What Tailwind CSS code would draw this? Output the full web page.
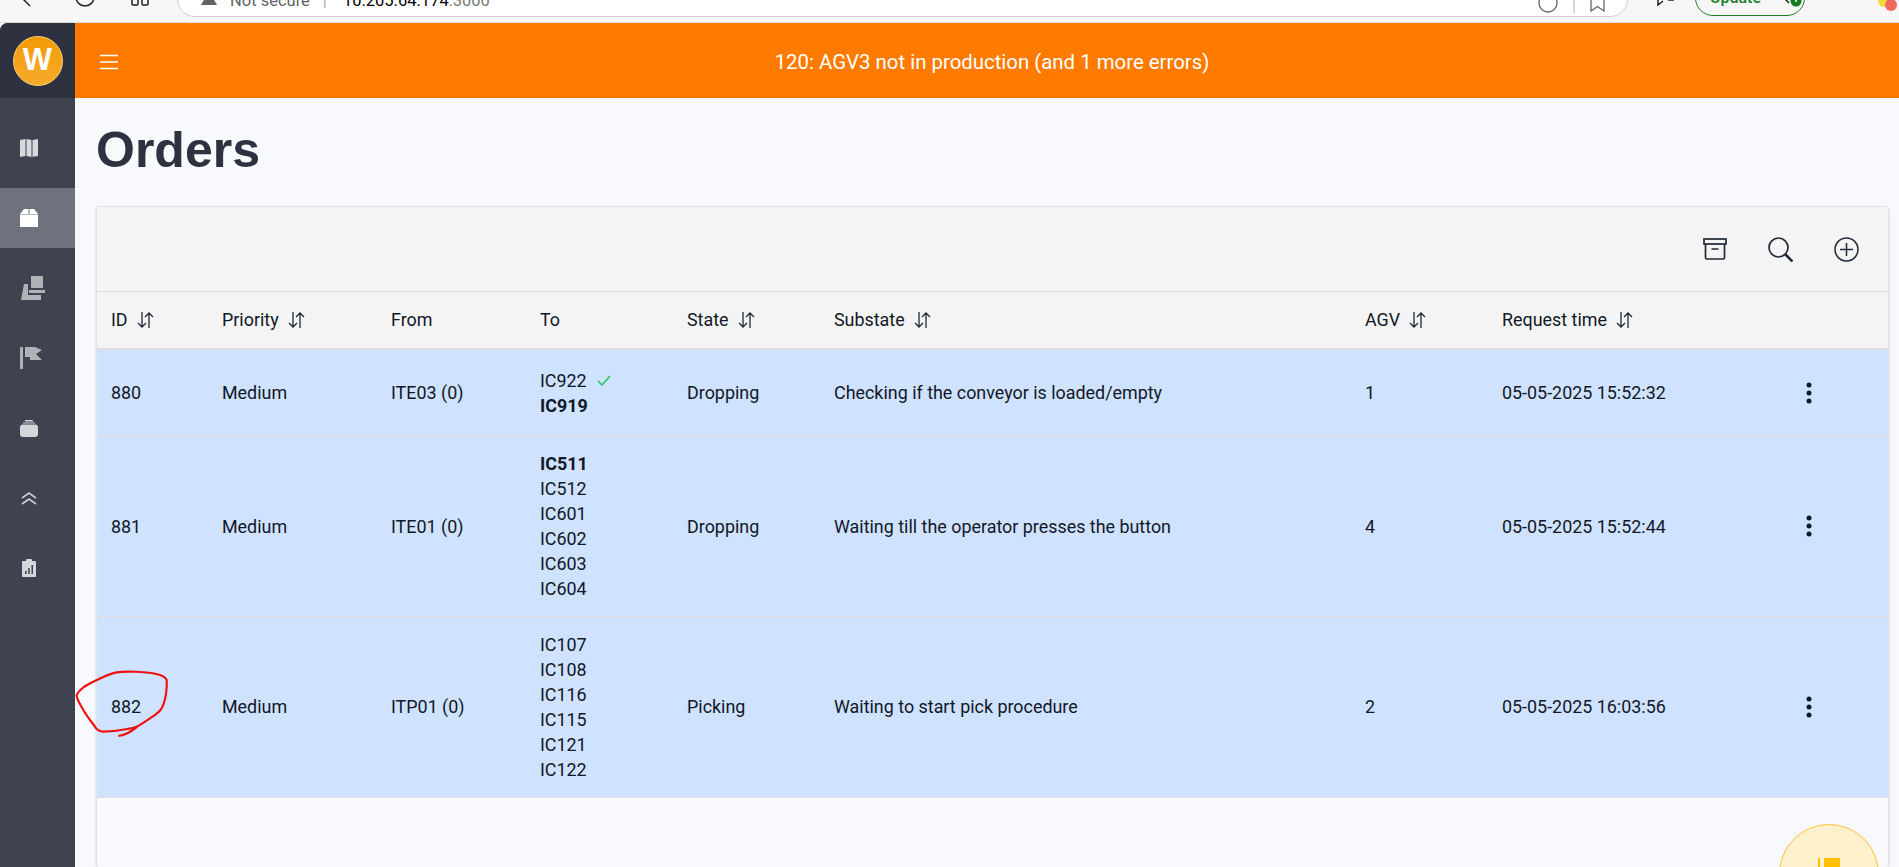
<!DOCTYPE html>
<html lang="en">
<head>
  <meta charset="UTF-8" />
  <title>Orders</title>
  <script src="https://cdn.jsdelivr.net/npm/@tailwindcss/browser@4"></script>
</head>
<body class="bg-[#f6f6f6] font-['Roboto',sans-serif] text-[17.900px] text-[#111827]">
<div class="relative h-[867px] overflow-hidden">
  <!-- browser bar, cut off at the top -->
  <div class="flex h-[23px] items-end overflow-hidden border-b border-[#dcdcdc] pb-[5px]">
    <svg class="mb-[10px] ml-[23px] shrink-0" width="8" height="20" viewBox="0 0 8 20" fill="none" stroke="#222" stroke-width="1.500"><path d="M0 12l7 7"/></svg>
    <svg class="mb-[10px] ml-[44px] shrink-0" width="20" height="20" viewBox="0 0 20 20" fill="none" stroke="#222" stroke-width="1.500"><circle cx="10" cy="10" r="9"/></svg>
    <svg class="mb-[11px] ml-[36px] shrink-0" width="18" height="20" viewBox="0 0 18 20" fill="none" stroke="#222" stroke-width="1.500"><rect x="1" y="4" width="6" height="15" rx="1"/><rect x="11" y="4" width="6" height="15" rx="1"/></svg>
    <div class="ml-[28px] flex h-[40px] w-[1451px] shrink-0 items-end rounded-b-[18px] border border-[#cfcfcf] bg-white pb-[3px] pl-[23px] pr-[22px] text-[16.500px] leading-[24px]">
      <svg class="mb-[8px]" width="16" height="14" viewBox="0 0 16 14" fill="#5f6368"><path d="M8 0l8 14H0z"/></svg>
      <span class="ml-[13px] text-[#5f6368]">Not secure</span>
      <span class="ml-[13px] text-[#aaaaaa]">|</span>
      <span class="ml-[16px] text-black">10.205.64.174<span class="text-[#777777]">:3000</span></span>
      <svg class="mb-[0px] ml-auto" width="20" height="20" viewBox="0 0 20 20" fill="none" stroke="#666" stroke-width="1.300"><circle cx="10" cy="10" r="9"/></svg>
      <span class="mx-[15px] h-[20px] w-[2px] bg-[#d5d5d5]"></span>
      <svg class="mb-[1px]" width="15" height="20" viewBox="0 0 15 20" fill="none" stroke="#666" stroke-width="1.300"><path d="M1 6h13v13l-6.500-4.500L1 19z"/></svg>
    </div>
    <svg class="mb-[11px] ml-[29px] shrink-0" width="17" height="20" viewBox="0 0 17 20" fill="none" stroke="#222" stroke-width="1.500"><path d="M1 6v13l5-4M11 14h6M11 10h6"/></svg>
    <div class="mb-[1px] ml-[21px] flex h-[40px] w-[110px] shrink-0 items-end rounded-b-[18px] border border-[#1a7f26] pb-[5px] pl-[14px] text-[16px] leading-[24px] font-medium text-[#1a7f26]">
      Update
      <svg class="mb-[3px] ml-[20px]" width="22" height="14" viewBox="0 0 22 14" fill="none"><path d="M0 2l8 8" stroke="#222" stroke-width="1.500"/><circle cx="15" cy="8" r="5.500" fill="#157a1e"/><path d="M15 5v4" stroke="#fff" stroke-width="1.500"/></svg>
    </div>
    <svg class="mb-[6px] ml-[70px] shrink-0" width="24" height="20" viewBox="0 0 24 20"><circle cx="9" cy="10" r="6" fill="#f2dc3c"/><circle cx="16" cy="14" r="6" fill="#ee6a5f"/></svg>
  </div>

  <div class="flex h-[844px]">
    <aside class="flex w-[75px] shrink-0 flex-col overflow-hidden rounded-tl-[8px] bg-[#3f4350]">
      <div class="flex h-[75px] shrink-0 items-center justify-center bg-[#2d3140]">
        <div class="flex h-[50px] w-[50px] items-center justify-center rounded-full border border-[#ffd27a] bg-linear-to-b from-[#f29a00] to-[#f7ab2a] font-['Liberation_Sans',sans-serif] text-[31px] font-bold text-white">W</div>
      </div>
      <nav class="flex flex-col gap-[10px] pt-[20px]">
        <a class="flex h-[60px] items-center pl-[20px]">
          <svg width="18" height="18" viewBox="0 0 18 18" fill="#d8d9dc"><path d="M0 1l5.500-1v17L0 18zM6.500 0l5 1v17l-5-1zM12.500 1L18 0v17l-5.500 1z"/></svg>
        </a>
        <a class="flex h-[60px] items-center bg-[#6f727c] pl-[20px]">
          <svg width="18" height="18" viewBox="0 0 18 18" fill="#ffffff"><path d="M0 5 4 0h4.500v5zM9.500 0H14l4 5H9.500zM0 5.500h18V18H0z"/></svg>
        </a>
        <a class="flex h-[60px] items-center pl-[21px]">
          <svg width="24" height="24" viewBox="0 0 24 24" fill="#b0b2b8"><path d="M10 0h12v12H10zM8 14h16v3H8zM3 8h4v11h13v5H0z"/></svg>
        </a>
        <a class="flex h-[60px] items-center pl-[20px]">
          <svg width="22" height="22" viewBox="0 0 22 22" fill="#b0b2b8"><path d="M0 0h3v22H0zM5 0h10l7 3-6 4 6 6H10v-3H5z"/></svg>
        </a>
        <a class="flex h-[60px] items-center pl-[20px]">
          <svg width="18" height="17" viewBox="0 0 18 17" fill="#d5d6d9"><path d="M5 0h8v1.500H5zM3 2.500h12v1H3zM3 4.500h12a3 3 0 0 1 3 3V14a3 3 0 0 1-3 3H3a3 3 0 0 1-3-3V7.500a3 3 0 0 1 3-3z"/></svg>
        </a>
        <a class="flex h-[60px] items-center pl-[21px]">
          <svg width="16" height="13" viewBox="0 0 16 13" fill="none" stroke="#c9cbd0" stroke-width="1.600"><path d="M1 6l7-5 7 5M1 12l7-5 7 5"/></svg>
        </a>
        <a class="flex h-[60px] items-center pl-[22px]">
          <svg width="14" height="18" viewBox="0 0 14 18" fill="#d5d6d9"><path fill-rule="evenodd" d="M1 2h3V1a1 1 0 0 1 1-1h4a1 1 0 0 1 1 1v1h3a1 1 0 0 1 1 1v14a1 1 0 0 1-1 1H1a1 1 0 0 1-1-1V3a1 1 0 0 1 1-1zM3 12v3h1.500v-3zM6.200 9v6h1.500V9zM9.500 6v9H11V6z"/></svg>
        </a>
      </nav>
    </aside>

    <div class="flex min-w-0 flex-1 flex-col bg-[#f7f9fc]">
      <header class="relative flex h-[75px] shrink-0 items-center justify-center pl-[10px] pt-[4px] bg-[#ff7b00] text-[20.400px] text-white">
        <svg class="absolute left-[25px] top-[31px]" width="18" height="16" viewBox="0 0 18 16" stroke="#fff" stroke-width="1.500"><path d="M0 1.500h18M0 8h18M0 14.500h18"/></svg>
        <span>120: AGV3 not in production (and 1 more errors)</span>
      </header>

      <main class="flex min-h-0 flex-1 flex-col pl-[21px] pr-[10px]">
        <h1 class="mt-[24px] mb-[28px] font-['Liberation_Sans',sans-serif] text-[50px] leading-[56px] font-bold text-[#2d3140]">Orders</h1>

        <div class="flex-1 rounded-[3px] border-x border-t border-[#e2e2e4] shadow-[0_1px_3px_rgba(0,0,0,0.15)]">
          <div class="flex h-[85px] items-center justify-end gap-[41px] border-b border-[#dedede] bg-[#f4f4f4] pr-[29px]">
            <svg width="24" height="22" viewBox="0 0 24 22" fill="none" stroke="#1f2937" stroke-width="1.700"><rect x="1" y="1" width="22" height="5"/><path d="M2.500 6v13.500A1.500 1.500 0 0 0 4 21h16a1.500 1.500 0 0 0 1.500-1.500V6M8.500 11h7"/></svg>
            <svg width="25" height="25" viewBox="0 0 25 25" fill="none" stroke="#1f2937" stroke-width="1.700"><circle cx="10.500" cy="10.500" r="9.500"/><path d="M17 17l7.500 7.500" stroke-width="2.600"/></svg>
            <svg width="25" height="25" viewBox="0 0 25 25" fill="none" stroke="#1f2937" stroke-width="1.500"><circle cx="12.500" cy="12.500" r="11.500"/><path d="M12.500 6v13M6 12.500h13"/></svg>
          </div>

          <table class="w-full table-fixed border-collapse">
            <colgroup>
              <col class="w-[111px]" /><col class="w-[169px]" /><col class="w-[149px]" /><col class="w-[147px]" /><col class="w-[147px]" /><col class="w-[531px]" /><col class="w-[137px]" /><col class="w-[292px]" /><col />
            </colgroup>
            <thead>
              <tr class="h-[57px] border-b-2 border-[#dedede] bg-[#f4f4f4] text-left [&>th]:pl-[14px] [&>th]:font-normal">
                <th><div class="flex items-center gap-[9px]">ID <svg width="17" height="16" viewBox="0 0 17 16" fill="none" stroke="#1f2937" stroke-width="1.300"><path d="M5 0v15M1 11l4 4 4-4M12 16V1M8 5l4-4 4 4"/></svg></div></th>
                <th><div class="flex items-center gap-[9px]">Priority <svg width="17" height="16" viewBox="0 0 17 16" fill="none" stroke="#1f2937" stroke-width="1.300"><path d="M5 0v15M1 11l4 4 4-4M12 16V1M8 5l4-4 4 4"/></svg></div></th>
                <th>From</th>
                <th>To</th>
                <th><div class="flex items-center gap-[9px]">State <svg width="17" height="16" viewBox="0 0 17 16" fill="none" stroke="#1f2937" stroke-width="1.300"><path d="M5 0v15M1 11l4 4 4-4M12 16V1M8 5l4-4 4 4"/></svg></div></th>
                <th><div class="flex items-center gap-[9px]">Substate <svg width="17" height="16" viewBox="0 0 17 16" fill="none" stroke="#1f2937" stroke-width="1.300"><path d="M5 0v15M1 11l4 4 4-4M12 16V1M8 5l4-4 4 4"/></svg></div></th>
                <th><div class="flex items-center gap-[9px]">AGV <svg width="17" height="16" viewBox="0 0 17 16" fill="none" stroke="#1f2937" stroke-width="1.300"><path d="M5 0v15M1 11l4 4 4-4M12 16V1M8 5l4-4 4 4"/></svg></div></th>
                <th><div class="flex items-center gap-[9px]">Request time <svg width="17" height="16" viewBox="0 0 17 16" fill="none" stroke="#1f2937" stroke-width="1.300"><path d="M5 0v15M1 11l4 4 4-4M12 16V1M8 5l4-4 4 4"/></svg></div></th>
                <th></th>
              </tr>
            </thead>
            <tbody class="bg-[#cfe2ff] leading-[25px] [&_td]:pl-[14px] [&_tr]:border-b [&_tr]:border-[#dedede]">
              <tr class="h-[87px]">
                <td>880</td><td>Medium</td><td>ITE03 (0)</td>
                <td><div class="flex items-center gap-[10px]">IC922 <svg width="14" height="11" viewBox="0 0 14 11" fill="none" stroke="#22c55e" stroke-width="1.500"><path d="M1 6l4 4 8-9"/></svg></div><b>IC919</b></td>
                <td>Dropping</td><td>Checking if the conveyor is loaded/empty</td><td>1</td>
                <td>05-05-2025 15:52:32</td>
                <td><svg class="ml-[12px]" width="6" height="22" viewBox="0 0 6 22" fill="#111827"><circle cx="3" cy="3" r="2.500"/><circle cx="3" cy="11" r="2.500"/><circle cx="3" cy="19" r="2.500"/></svg></td>
              </tr>
              <tr class="h-[180px]">
                <td>881</td><td>Medium</td><td>ITE01 (0)</td>
                <td><b>IC511</b><br />IC512<br />IC601<br />IC602<br />IC603<br />IC604</td>
                <td>Dropping</td><td>Waiting till the operator presses the button</td><td>4</td>
                <td>05-05-2025 15:52:44</td>
                <td><svg class="ml-[12px]" width="6" height="22" viewBox="0 0 6 22" fill="#111827"><circle cx="3" cy="3" r="2.500"/><circle cx="3" cy="11" r="2.500"/><circle cx="3" cy="19" r="2.500"/></svg></td>
              </tr>
              <tr class="h-[181px]">
                <td>882</td><td>Medium</td><td>ITP01 (0)</td>
                <td>IC107<br />IC108<br />IC116<br />IC115<br />IC121<br />IC122</td>
                <td>Picking</td><td>Waiting to start pick procedure</td><td>2</td>
                <td>05-05-2025 16:03:56</td>
                <td><svg class="ml-[12px]" width="6" height="22" viewBox="0 0 6 22" fill="#111827"><circle cx="3" cy="3" r="2.500"/><circle cx="3" cy="11" r="2.500"/><circle cx="3" cy="19" r="2.500"/></svg></td>
              </tr>
            </tbody>
          </table>
        </div>
      </main>
    </div>
  </div>

  <!-- hand drawn mark around 882 -->
  <svg class="absolute left-[60px] top-[660px]" width="110" height="80" viewBox="0 120 330 240" fill="none" stroke="#f01010" stroke-width="6.500"><path d="M50 225C60 205 80 195 100 185S150 160 170 157S260 153 300 165Q318 172 320 180C322 200 318 240 305 265C295 280 285 285 270 295S235 318 230 320S180 334 130 335Q112 333 105 320C90 300 78 285 70 270S50 240 50 225ZM175 348C195 345 215 335 232 320"/></svg>

  <div class="absolute left-[1779px] top-[824px] flex h-[100px] w-[100px] justify-center rounded-full border border-[#ffc233] bg-[#fff1cc] pt-[33px]">
    <svg width="22" height="24" viewBox="0 0 22 24" fill="#ffbf00"><path d="M0 0h2v24H0zM6 0h16v24H6z"/></svg>
  </div>
</div>
</body>
</html>
